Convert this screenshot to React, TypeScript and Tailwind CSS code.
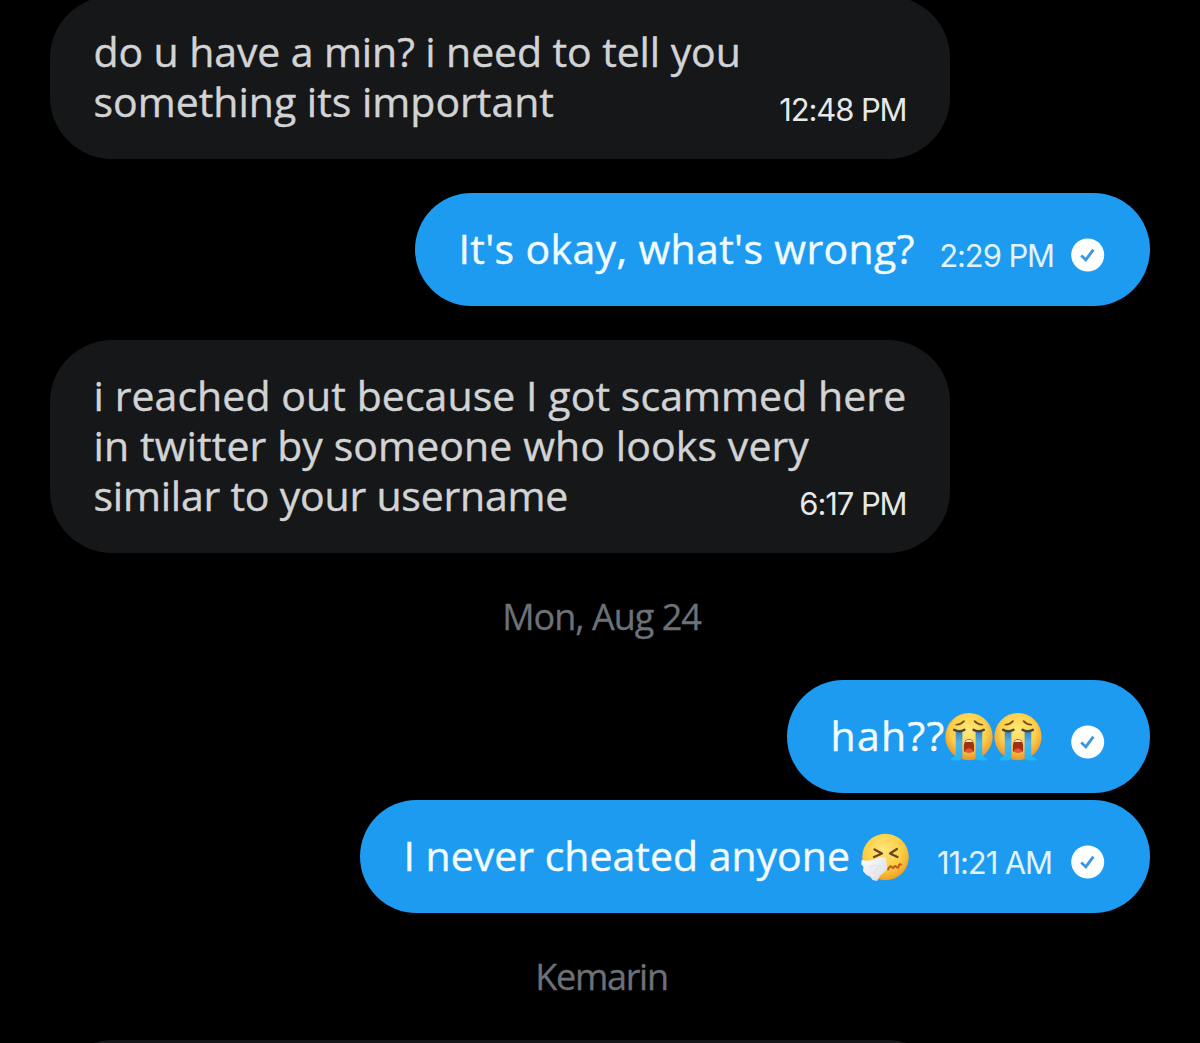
import { ReactNode } from "react";
import clsx from "clsx";

interface LineProps {
  children: ReactNode;
  className?: string;
}

function Line({ children, className }: LineProps) {
  return (
    <div
      className={clsx(
        "h-[50px] leading-[50px] whitespace-pre [-webkit-text-stroke:0.4px_currentColor]",
        className
      )}
    >
      {children}
    </div>
  );
}

function Time({ children, className }: LineProps) {
  return (
    <div
      className={clsx(
        "font-['Inter'] text-[31px] leading-[40px] tracking-[-1.1px] whitespace-pre",
        className
      )}
    >
      {children}
    </div>
  );
}

function SentIcon() {
  return (
    <svg viewBox="0 0 34 34" className="h-[34px] w-[34px] shrink-0">
      <circle cx="16.7" cy="17" r="16.5" fill="#fff" />
      <path
        d="M10.2 17.5 14.8 21.8 22.4 11.7"
        fill="none"
        stroke="#3d97e0"
        strokeWidth="2.9"
      />
    </svg>
  );
}

function CryingEmoji() {
  return (
    <svg viewBox="0 0 48 50" className="mt-[5px] h-[51px] w-[49px] shrink-0">
      <defs>
        <radialGradient id="cryFace" cx="0.5" cy="0.38" r="0.62">
          <stop offset="0" stopColor="#ffe97c" />
          <stop offset="0.6" stopColor="#fdd04a" />
          <stop offset="1" stopColor="#e8922a" />
        </radialGradient>
        <linearGradient id="cryTear" x1="0" y1="0" x2="0" y2="1">
          <stop offset="0" stopColor="#3a7fbb" />
          <stop offset="0.4" stopColor="#4fb4ea" />
          <stop offset="1" stopColor="#1fb6f6" />
        </linearGradient>
      </defs>
      <circle cx="23.5" cy="24.2" r="23.2" fill="url(#cryFace)" />
      <path
        d="M11 12.5q5-.6 7.6-3.6M29 8.9q2.6 3 7.6 3.6"
        fill="none"
        stroke="#75501b"
        strokeWidth="1.7"
        strokeLinecap="round"
      />
      <path
        d="M10.5 18.2q3.500 1.500 6.500 0v26q0 3.300-4.500 3.300H6.500q-2-.8 0-2.500 4-1 4-4zM36.500 18.200q-3.500 1.500-6.500 0v26q0 3.300 4.500 3.300h6q2-.8 0-2.500-4-1-4-4z"
        fill="url(#cryTear)"
      />
      <path
        d="M9 17.500q5 2.600 10 0M28 17.500q5 2.600 10 0"
        fill="none"
        stroke="#4e4634"
        strokeWidth="2.4"
        strokeLinecap="round"
      />
      <path
        d="M18.500 38.500v-6q.8-6 5-6t5 6v6q-5 2.500-10 0z"
        fill="#a2300f"
      />
      <path d="M20 28.600q3.500-2.600 7 0v.9h-7z" fill="#f7ece6" />
      <path d="M18.800 38.500q4.700-6 9.400 0-4.700 2.300-9.400 0z" fill="#e6533b" />
    </svg>
  );
}

function SneezingEmoji() {
  return (
    <svg viewBox="0 0 50 50" className="mt-[6px] h-[50px] w-[50px] shrink-0">
      <defs>
        <radialGradient id="sneezeFace" cx="0.45" cy="0.35" r="0.65">
          <stop offset="0" stopColor="#ffe67a" />
          <stop offset="0.65" stopColor="#fccd43" />
          <stop offset="1" stopColor="#ef9e27" />
        </radialGradient>
        <linearGradient id="tissue" x1="0" y1="0" x2="1" y2="1">
          <stop offset="0" stopColor="#ffffff" />
          <stop offset="1" stopColor="#d9dae2" />
        </linearGradient>
      </defs>
      <circle cx="25.5" cy="24" r="23.3" fill="url(#sneezeFace)" />
      <path
        d="M14.5 16.500l7.500 4-8 3.500M37 16l-7 4.500 7.500 3.500"
        fill="none"
        stroke="#65431c"
        strokeWidth="2.2"
        strokeLinecap="round"
        strokeLinejoin="round"
      />
      <path
        d="M28 36.500q2-4.500 3.700-2.500t2.300 0 2.500 0 2.300-.8 2.200-1.700"
        fill="none"
        stroke="#c6571c"
        strokeWidth="2"
        strokeLinecap="round"
      />
      {/* tissue held under the nose */}
      <path
        d="M1.500 27q8 2 14.500-1.500 5-2 9.500-.5 1.500 5 1.500 11.500-4 3.500-7 6.500l-3 5-4.500-1-2-3-4-2-3.500-4 .5-4-2.500-3q1-2 .5-4z"
        fill="url(#tissue)"
      />
      <path
        d="M9 34l8-2M13 41l7-9"
        fill="none"
        stroke="#dcdde5"
        strokeWidth="0.9"
      />
    </svg>
  );
}

interface BubbleProps {
  children?: ReactNode;
  sent?: boolean;
  className?: string;
}

function Bubble({ children, sent, className }: BubbleProps) {
  return (
    <div
      className={clsx(
        "flex shrink-0 justify-between pt-[30px] pl-[43.5px]",
        sent
          ? "h-[113px] self-end rounded-[56.5px] bg-[#1d9bf0] pr-[45px] text-[#f2fbff]"
          : "w-[900px] self-start rounded-[62px] bg-[#161718] pr-[43.5px] text-[#d2d3d4]",
        className
      )}
    >
      {children}
    </div>
  );
}

function DateLabel({ children, className }: LineProps) {
  return (
    <div
      className={clsx(
        "mt-[40px] h-[48px] shrink-0 pl-[3px] text-center text-[36px] leading-[48px] text-[#6c7178] [-webkit-text-stroke:0.3px_currentColor]",
        className
      )}
    >
      {children}
    </div>
  );
}

export default function App() {
  return (
    <div className="flex h-[1043px] w-[1200px] flex-col overflow-hidden bg-black px-[50px] font-['Open_Sans',sans-serif] text-[41px]">
      <Bubble className="-mt-1 h-[163px]">
        <div>
          <Line className="tracking-[-0.1px]">
            do u have a min? i need to tell you
          </Line>
          <Line>something its important</Line>
        </div>
        <Time className="mt-[64px] text-[#e7e8e9]">12:48 PM</Time>
      </Bubble>

      <Bubble sent className="mt-[34px] w-[735px]">
        <Line className="tracking-[0.35px]">It's okay, what's wrong?</Line>
        <div className="flex gap-[17px]">
          <Time className="mt-[13px] text-[#e0f3fe]">2:29 PM</Time>
          <div className="mt-[15px]">
            <SentIcon />
          </div>
        </div>
      </Bubble>

      <Bubble className="mt-[34px] h-[213px]">
        {/* the first line runs over the column of the time */}
        <div className="w-0">
          <Line className="tracking-[0.07px]">
            i reached out because I got scammed here
          </Line>
          <Line className="tracking-[0.1px]">
            in twitter by someone who looks very
          </Line>
          <Line className="tracking-[-0.22px]">similar to your username</Line>
        </div>
        <Time className="mt-[114px] text-[#e7e8e9]">6:17 PM</Time>
      </Bubble>

      <DateLabel className="tracking-[-1px]">Mon, Aug 24</DateLabel>

      <Bubble sent className="mt-[39px] w-[363px]">
        <div className="flex h-[50px] items-center">
          <Line className="tracking-[1.3px]">hah??</Line>
          <CryingEmoji />
          <CryingEmoji />
        </div>
        <div className="mt-[15px]">
          <SentIcon />
        </div>
      </Bubble>

      <Bubble sent className="mt-[7px] w-[790px]">
        <div className="flex h-[50px] items-center gap-[10px]">
          <Line>I never cheated anyone</Line>
          <SneezingEmoji />
        </div>
        <div className="flex gap-[19px]">
          <Time className="mt-[13px] text-[#e0f3fe]">11:21 AM</Time>
          <div className="mt-[15px]">
            <SentIcon />
          </div>
        </div>
      </Bubble>

      <DateLabel className="tracking-[-1.3px]">Kemarin</DateLabel>

      <Bubble className="mt-[39px] h-[163px]" />
    </div>
  );
}
